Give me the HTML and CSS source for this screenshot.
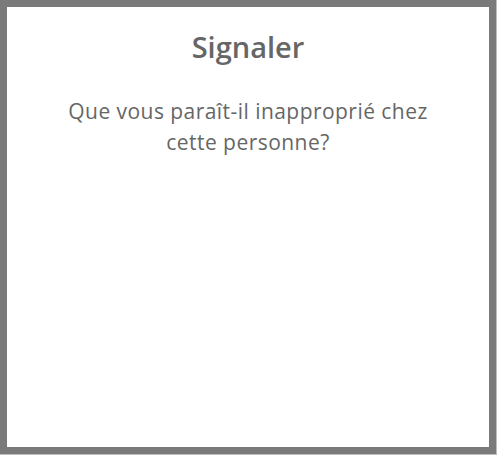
FILE: index.html
```html
<!DOCTYPE html>
<html lang="fr">
<head>
<meta charset="utf-8">
<link rel="stylesheet" href="styles.css">
</head>
<body>
<div class="frame">
  <div class="panel">
    <h1 class="title">Signaler</h1>
    <p class="question">Que vous paraît-il inapproprié chez cette personne?</p>
  </div>
</div>
</body>
</html>
```
FILE: styles.css
```css
html, body {
  margin: 0;
  padding: 0;
  width: 497px;
  height: 455px;
  background: #bdbdbd;
}
.frame {
  box-sizing: border-box;
  width: 496px;
  height: 454px;
  background: #7a7a7a;
  padding: 7px;
}
.panel {
  box-sizing: border-box;
  width: 482px;
  height: 440px;
  background: #ffffff;
  display: flex;
  flex-direction: column;
  align-items: center;
  font-family: "Open Sans", Lato, sans-serif;
  color: #666666;
  padding-top: 22px;
}
.title {
  margin: 0;
  font-size: 29px;
  font-weight: 600;
  line-height: 36px;
}
.question {
  margin: 31px 0 0;
  width: 374px;
  text-align: center;
  font-size: 21px;
  letter-spacing: 0.45px;
  line-height: 31px;
  font-weight: 400;
}
```
